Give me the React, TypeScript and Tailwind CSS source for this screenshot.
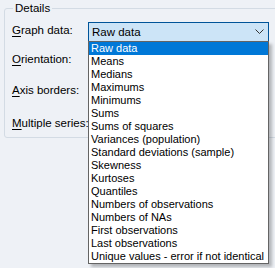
import React from 'react';

const options = [
  'Raw data',
  'Means',
  'Medians',
  'Maximums',
  'Minimums',
  'Sums',
  'Sums of squares',
  'Variances (population)',
  'Standard deviations (sample)',
  'Skewness',
  'Kurtoses',
  'Quantiles',
  'Numbers of observations',
  'Numbers of NAs',
  'First observations',
  'Last observations',
  'Unique values - error if not identical',
];

const Label: React.FC<{ k: string; rest: string; className: string }> = ({ k, rest, className }) => (
  <div className={`flex items-center ${className}`}>
    <span>
      <span className="underline underline-offset-2">{k}</span>
      {rest}
    </span>
  </div>
);

const App: React.FC = () => {
  return (
    <div className="relative w-[275px] h-[268px] overflow-hidden bg-[#eef1f6] font-['Liberation_Sans',sans-serif] text-[11px] leading-[13px] text-black">
      <fieldset className="ml-[4px] mt-[1px] w-[280px] h-[137px] rounded-[3px] border border-[#d3dbe4] px-[7px]">
        <legend className="ml-[1px] px-[2px] leading-[14px] text-[11.5px]">Details</legend>
        <div className="flex flex-col text-[11.5px]">
          <Label k="G" rest="raph data:" className="h-[20px] mt-[5px]" />
          <Label k="O" rest="rientation:" className="h-[20px] mt-[9px]" />
          <Label k="A" rest="xis borders:" className="h-[20px] mt-[11px]" />
          <Label k="M" rest="ultiple series:" className="h-[20px] mt-[13px]" />
        </div>
      </fieldset>

      {/* combobox */}
      <div className="absolute left-[88px] top-[22px] w-[181px] h-[20px] border border-[#005499] bg-[#cce4f7] flex items-center pl-[3px] text-[11.5px]">
        <span>Raw data</span>
        <svg className="ml-auto mr-[4px]" width="9" height="6" viewBox="0 0 9 6">
          <path d="M0.5 0.5 L4.5 4.5 L8.5 0.5" fill="none" stroke="#333" strokeWidth="1" />
        </svg>
      </div>

      {/* dropdown list */}
      <div className="absolute left-[88px] top-[41px] w-[181px] border border-[#646464] bg-white shadow-[3px_3px_3px_rgba(0,0,0,0.25)]">
        {options.map((o, i) => (
          <div
            key={o}
            className={`h-[13px] pl-[2px] whitespace-nowrap flex items-center ${
              i === 0 ? 'bg-[#0078d7] text-white' : ''
            }`}
          >
            {o}
          </div>
        ))}
      </div>
    </div>
  );
};

export default App;
